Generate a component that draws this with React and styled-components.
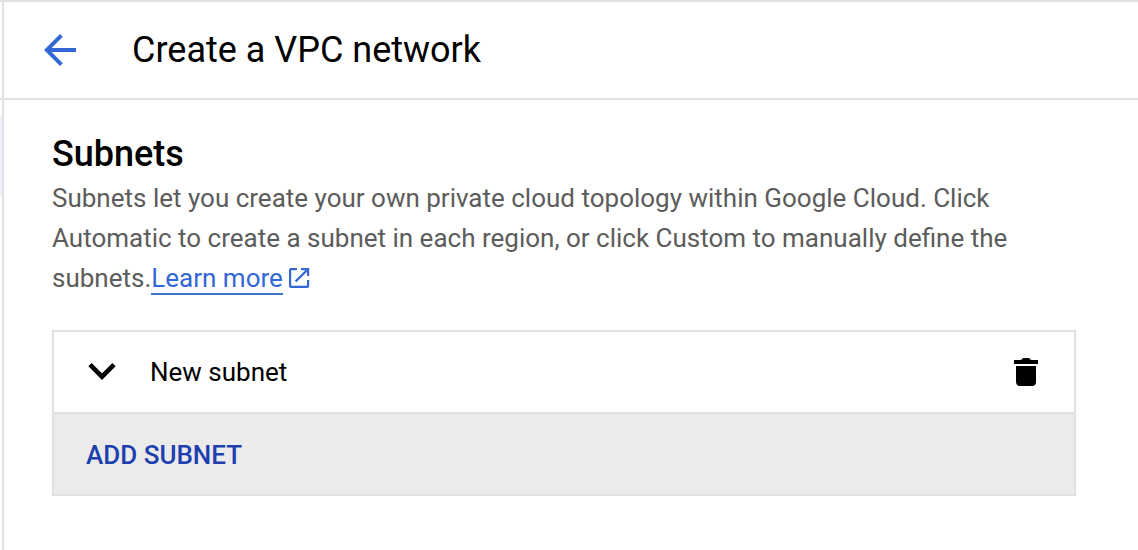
import React, { useState } from 'react';
import styled, { createGlobalStyle } from 'styled-components';

const GlobalStyle = createGlobalStyle`
  * {
    box-sizing: border-box;
  }

  body {
    margin: 0;
    background: #fff;
    color: #000;
    font-family: Roboto, 'Liberation Sans', sans-serif;
  }
`;

const StyledPage = styled.div`
  display: flex;
  min-height: 100vh;
  border-top: 2px solid #e0e0e0;
`;

const StyledRail = styled.div`
  display: flex;
  flex-direction: column;
  width: 4px;
  border-right: 2px solid #e0e0e0;
`;

const StyledRailHeader = styled.div`
  height: 98px;
  border-bottom: 2px solid #e0e0e0;
`;

const StyledRailItem = styled.div`
  height: 80px;
  margin-top: 16px;
  background: #edf2fa;
`;

const StyledMain = styled.main`
  flex: 1;
`;

const StyledHeader = styled.header`
  display: flex;
  align-items: center;
  gap: 48px;
  height: 98px;
  padding: 0 32px;
  border-bottom: 2px solid #e0e0e0;
`;

const StyledTitle = styled.h1`
  margin: 0;
  font-size: 36px;
  font-weight: 400;
  line-height: 48px;
`;

const StyledIconButton = styled.button`
  display: flex;
  padding: 0;
  border: 0;
  background: none;
  color: ${({ $color }) => $color || '#000'};
  cursor: pointer;
`;

const StyledSection = styled.section`
  padding: 30px 62px 32px 48px;
`;

const StyledHeading = styled.h2`
  margin: 0;
  font-size: 36px;
  font-weight: 500;
  line-height: 48px;
`;

const StyledParagraph = styled.p`
  max-width: 980px;
  margin: 0;
  color: #5c5c5c;
  font-size: 26px;
  line-height: 40px;
`;

const StyledLink = styled.a`
  border-bottom: 2px solid #3b78c4;
  color: #3367d6;
  text-decoration: none;
`;

const StyledExternalIcon = styled.svg`
  margin-left: 6px;
  color: #3367d6;
  vertical-align: -1px;
`;

const StyledPanel = styled.div`
  margin-top: 32px;
  border: 2px solid #e0e0e0;
`;

const StyledSubnetRow = styled.div`
  display: flex;
  align-items: center;
  justify-content: space-between;
  height: 80px;
  padding: 0 32px;
`;

const StyledSubnetToggle = styled.button`
  display: flex;
  align-items: center;
  gap: 32px;
  padding: 0;
  border: 0;
  background: none;
  color: #000;
  font: inherit;
  font-size: 26px;
  line-height: 40px;
  cursor: pointer;
`;

const StyledPanelFooter = styled.div`
  padding: 21px 32px 19px;
  border-top: 2px solid #e0e0e0;
  background: #ebebeb;
`;

const StyledAddButton = styled.button`
  display: block;
  padding: 0;
  border: 0;
  background: none;
  color: #1e3fae;
  font: inherit;
  font-size: 26px;
  font-weight: 500;
  line-height: 40px;
  text-transform: uppercase;
  cursor: pointer;
`;

const BackIcon = () => (
  <svg width='48' height='48' viewBox='0 0 24 24' fill='currentColor' aria-hidden='true'>
    <path d='M20 11H7.83l5.59-5.59L12 4l-8 8 8 8 1.41-1.41L7.83 13H20z' />
  </svg>
);

const ExternalIcon = () => (
  <StyledExternalIcon
    width='21'
    height='20'
    viewBox='0 0 21 20'
    fill='none'
    stroke='currentColor'
    strokeWidth='2.2'
    aria-hidden='true'
  >
    <path d='M8 1.1H2.1a1 1 0 0 0-1 1v15.8a1 1 0 0 0 1 1h16a1 1 0 0 0 1-1V12' />
    <path d='M12 1.1h7.1V8M19 1.2L6.6 13.4' />
  </StyledExternalIcon>
);

const ChevronIcon = () => (
  <svg width='32' height='32' viewBox='0 0 32 32' fill='none' stroke='currentColor' strokeWidth='4.6' aria-hidden='true'>
    <path d='M4 8.7l12 12 12-12' />
  </svg>
);

const TrashIcon = () => (
  <svg width='32' height='32' viewBox='0 0 32 32' fill='currentColor' aria-hidden='true'>
    <path d='M4 4h7l2-2h6l2 2h7v4H4zM6 10h20v16a4 4 0 0 1-4 4H10a4 4 0 0 1-4-4z' />
  </svg>
);

const App = () => {
  const [subnets, setSubnets] = useState([{ id: 1, name: 'New subnet' }]);

  const addSubnet = () => setSubnets([...subnets, { id: Date.now(), name: 'New subnet' }]);
  const removeSubnet = id => setSubnets(subnets.filter(item => item.id !== id));

  return (
    <>
      <GlobalStyle />
      <StyledPage>
        <StyledRail>
          <StyledRailHeader />
          <StyledRailItem />
        </StyledRail>
        <StyledMain>
          <StyledHeader>
            <StyledIconButton type='button' aria-label='Back' $color='#3367d6'>
              <BackIcon />
            </StyledIconButton>
            <StyledTitle>Create a VPC network</StyledTitle>
          </StyledHeader>
          <StyledSection>
            <StyledHeading>Subnets</StyledHeading>
            <StyledParagraph>
              Subnets let you create your own private cloud topology within Google Cloud. Click
              Automatic to create a subnet in each region, or click Custom to manually define the
              subnets.
              <StyledLink href='#learn-more'>Learn more</StyledLink>
              <ExternalIcon />
            </StyledParagraph>
            <StyledPanel>
              {subnets.map(item => (
                <StyledSubnetRow key={item.id}>
                  <StyledSubnetToggle type='button'>
                    <ChevronIcon />
                    {item.name}
                  </StyledSubnetToggle>
                  <StyledIconButton
                    type='button'
                    aria-label='Delete subnet'
                    onClick={() => removeSubnet(item.id)}
                  >
                    <TrashIcon />
                  </StyledIconButton>
                </StyledSubnetRow>
              ))}
              <StyledPanelFooter>
                <StyledAddButton type='button' onClick={addSubnet}>
                  Add subnet
                </StyledAddButton>
              </StyledPanelFooter>
            </StyledPanel>
          </StyledSection>
        </StyledMain>
      </StyledPage>
    </>
  );
};

export default App;
